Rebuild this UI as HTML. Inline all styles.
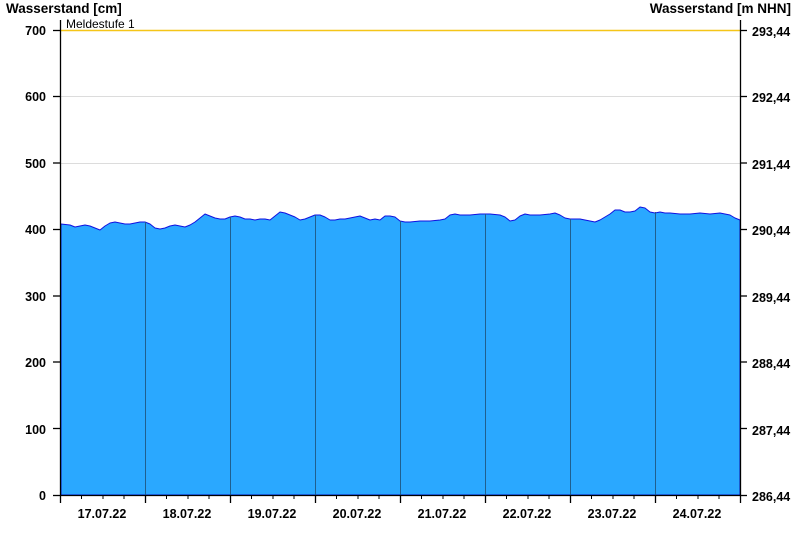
<!DOCTYPE html>
<html><head><meta charset="utf-8"><style>html,body{margin:0;padding:0;background:#fff}svg{display:block}</style></head><body>
<svg width="800" height="550" xmlns="http://www.w3.org/2000/svg" font-family="Liberation Sans, sans-serif">
<rect width="800" height="550" fill="#fff"/>
<g stroke="#dcdcdc" stroke-width="1">
<line x1="61" y1="96.5" x2="740" y2="96.5"/><line x1="61" y1="163.5" x2="740" y2="163.5"/>
</g>
<line x1="61" y1="30.5" x2="740" y2="30.5" stroke="#f5c518" stroke-width="1.5"/>
<text x="66" y="28" font-size="12" fill="#000">Meldestufe 1</text>
<polygon fill="#2aa8ff" stroke="#1010e0" stroke-width="1" stroke-linejoin="round" points="61,495 61,224 70,225 75,227 80,226 85,225 90,226 95,228 100,230 105,226 110,223 115,222 120,223 125,224 130,224 135,223 140,222 145,222 150,224 155,228 160,229 165,228 170,226 175,225 180,226 185,227 190,225 195,222 200,218 205,214 210,216 215,218 220,219 225,219 230,217 235,216 240,217 245,219 250,219 255,220 260,219 265,219 270,220 275,216 280,212 285,213 290,215 295,217 300,220 305,219 310,217 315,215 320,215 325,217 330,220 335,220 340,219 345,219 350,218 355,217 360,216 365,218 370,220 375,219 380,220 385,216 390,216 395,217 400,221 405,222 410,222 420,221 430,221 440,220 445,219 450,215 455,214 460,215 470,215 480,214 490,214 500,215 505,217 510,221 515,220 520,216 525,214 530,215 540,215 550,214 555,213 560,215 565,218 570,219 580,219 590,221 595,222 600,220 605,217 610,214 615,210 620,210 625,212 630,212 635,211 640,207 645,208 650,212 655,213 660,212 665,213 670,213 680,214 690,214 700,213 710,214 720,213 730,215 735,218 740,220 740,495"/>
<g stroke="#1f5f8f" stroke-width="1">
<line x1="145.5" y1="222" x2="145.5" y2="495"/><line x1="230.5" y1="217" x2="230.5" y2="495"/><line x1="315.5" y1="215" x2="315.5" y2="495"/><line x1="400.5" y1="221" x2="400.5" y2="495"/><line x1="485.5" y1="214" x2="485.5" y2="495"/><line x1="570.5" y1="219" x2="570.5" y2="495"/><line x1="655.5" y1="212" x2="655.5" y2="495"/>
</g>
<g stroke="#000" stroke-width="1.3">
<line x1="60.5" y1="20" x2="60.5" y2="495"/>
<line x1="740.5" y1="20" x2="740.5" y2="495"/>
<line x1="60" y1="495.5" x2="741" y2="495.5"/>
<line x1="53" y1="30.5" x2="60" y2="30.5"/><line x1="53" y1="96.5" x2="60" y2="96.5"/><line x1="53" y1="163" x2="60" y2="163"/><line x1="53" y1="229.5" x2="60" y2="229.5"/><line x1="53" y1="296" x2="60" y2="296"/><line x1="53" y1="362" x2="60" y2="362"/><line x1="53" y1="428.5" x2="60" y2="428.5"/><line x1="53" y1="495.5" x2="60" y2="495.5"/>
<line x1="740" y1="30.5" x2="747" y2="30.5"/><line x1="740" y1="96.5" x2="747" y2="96.5"/><line x1="740" y1="163" x2="747" y2="163"/><line x1="740" y1="229.5" x2="747" y2="229.5"/><line x1="740" y1="296" x2="747" y2="296"/><line x1="740" y1="362" x2="747" y2="362"/><line x1="740" y1="428.5" x2="747" y2="428.5"/><line x1="740" y1="495.5" x2="747" y2="495.5"/>
<line x1="60.5" y1="495" x2="60.5" y2="503"/><line x1="145.5" y1="495" x2="145.5" y2="503"/><line x1="230.5" y1="495" x2="230.5" y2="503"/><line x1="315.5" y1="495" x2="315.5" y2="503"/><line x1="400.5" y1="495" x2="400.5" y2="503"/><line x1="485.5" y1="495" x2="485.5" y2="503"/><line x1="570.5" y1="495" x2="570.5" y2="503"/><line x1="655.5" y1="495" x2="655.5" y2="503"/><line x1="740.5" y1="495" x2="740.5" y2="503"/>
</g>
<g stroke="#000" stroke-width="1">
<line x1="81.5" y1="495" x2="81.5" y2="499"/><line x1="103" y1="495" x2="103" y2="499"/><line x1="124" y1="495" x2="124" y2="499"/>
<line x1="166.5" y1="495" x2="166.5" y2="499"/><line x1="188" y1="495" x2="188" y2="499"/><line x1="209" y1="495" x2="209" y2="499"/>
<line x1="251.5" y1="495" x2="251.5" y2="499"/><line x1="273" y1="495" x2="273" y2="499"/><line x1="294" y1="495" x2="294" y2="499"/>
<line x1="336.5" y1="495" x2="336.5" y2="499"/><line x1="358" y1="495" x2="358" y2="499"/><line x1="379" y1="495" x2="379" y2="499"/>
<line x1="421.5" y1="495" x2="421.5" y2="499"/><line x1="443" y1="495" x2="443" y2="499"/><line x1="464" y1="495" x2="464" y2="499"/>
<line x1="506.5" y1="495" x2="506.5" y2="499"/><line x1="528" y1="495" x2="528" y2="499"/><line x1="549" y1="495" x2="549" y2="499"/>
<line x1="591.5" y1="495" x2="591.5" y2="499"/><line x1="613" y1="495" x2="613" y2="499"/><line x1="634" y1="495" x2="634" y2="499"/>
<line x1="676.5" y1="495" x2="676.5" y2="499"/><line x1="698" y1="495" x2="698" y2="499"/><line x1="719" y1="495" x2="719" y2="499"/>
</g>
<g font-size="12.5" font-weight="bold" fill="#000">
<text x="6" y="13" font-size="13.5">Wasserstand [cm]</text>
<text x="791" y="13" font-size="13.5" text-anchor="end">Wasserstand [m NHN]</text>
<g text-anchor="end">
<text x="46" y="35">700</text><text x="46" y="101">600</text><text x="46" y="168">500</text><text x="46" y="234">400</text><text x="46" y="301">300</text><text x="46" y="367">200</text><text x="46" y="434">100</text><text x="46" y="500">0</text>
</g>
<g>
<text x="752" y="36">293,44</text><text x="752" y="102">292,44</text><text x="752" y="169">291,44</text><text x="752" y="235">290,44</text><text x="752" y="302">289,44</text><text x="752" y="368">288,44</text><text x="752" y="435">287,44</text><text x="752" y="501">286,44</text>
</g>
<g text-anchor="middle">
<text x="102" y="518">17.07.22</text><text x="187" y="518">18.07.22</text><text x="272" y="518">19.07.22</text><text x="357" y="518">20.07.22</text><text x="442" y="518">21.07.22</text><text x="527" y="518">22.07.22</text><text x="612" y="518">23.07.22</text><text x="697" y="518">24.07.22</text>
</g>
</g>
</svg>
</body></html>
